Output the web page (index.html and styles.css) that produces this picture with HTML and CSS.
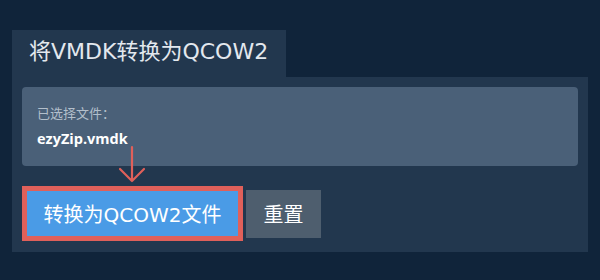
FILE: index.html
```html
<!DOCTYPE html>
<html lang="zh">
<head>
<meta charset="utf-8">
<link rel="stylesheet" href="styles.css">
</head>
<body>
<div class="page">
  <div class="tab">将VMDK转换为QCOW2</div>
  <div class="panel">
    <div class="info">
      <div class="label">已选择文件：</div>
      <div class="file">ezyZip.vmdk</div>
    </div>
    <div class="actions">
      <button class="convert">转换为QCOW2文件</button>
      <button class="reset">重置</button>
    </div>
    <svg class="arrow" width="30" height="40" viewBox="0 0 30 40">
      <path d="M15 2 L15 36 M3 24 L15 36 L27 24" fill="none" stroke="#e0605a" stroke-width="2.2" stroke-linecap="round" stroke-linejoin="round"/>
    </svg>
  </div>
</div>
</body>
</html>
```
FILE: styles.css
```css
* { box-sizing: border-box; }
html, body { margin: 0; padding: 0; }
body {
  background: #10243a;
  width: 600px;
  height: 280px;
  overflow: hidden;
  font-family: "Noto Sans CJK SC", "Noto Sans", sans-serif;
}
.page {
  padding: 30px 12px 0 12px;
}
.tab {
  display: inline-flex;
  align-items: center;
  width: 274px;
  height: 47px;
  padding: 0 0 4px 17px;
  background: #22374e;
  color: #e3e8ee;
  font-family: "DejaVu Sans", "Noto Sans CJK SC", sans-serif;
  font-size: 22px;
  line-height: 1;
}
.panel {
  position: relative;
  background: #22374e;
  padding: 10px 10px 11px 10px;
}
.info {
  background: #4a6078;
  border-radius: 4px;
  height: 79px;
  padding: 17px 15px 0 15px;
}
.label {
  color: #b3bfcb;
  font-size: 13px;
  line-height: 18px;
}
.file {
  color: #ffffff;
  font-family: "Open Sans", "Noto Sans", sans-serif;
  font-size: 14.5px;
  font-weight: bold;
  line-height: 20px;
  margin-top: 7px;
}
.actions {
  display: flex;
  align-items: center;
  gap: 3px;
  margin-top: 20px;
}
button {
  font-family: "DejaVu Sans", "Noto Sans CJK SC", sans-serif;
  border: none;
  margin: 0;
  color: #ffffff;
  cursor: pointer;
}
.convert {
  width: 221px;
  height: 55px;
  background: #4a9be6;
  border: 5px solid #e0605a;
  font-size: 20px;
  padding: 0;
}
.reset {
  width: 75px;
  height: 48px;
  background: #4e5e6e;
  font-size: 20px;
  padding: 0;
}
.arrow {
  position: absolute;
  left: 105px;
  top: 68px;
}
```
